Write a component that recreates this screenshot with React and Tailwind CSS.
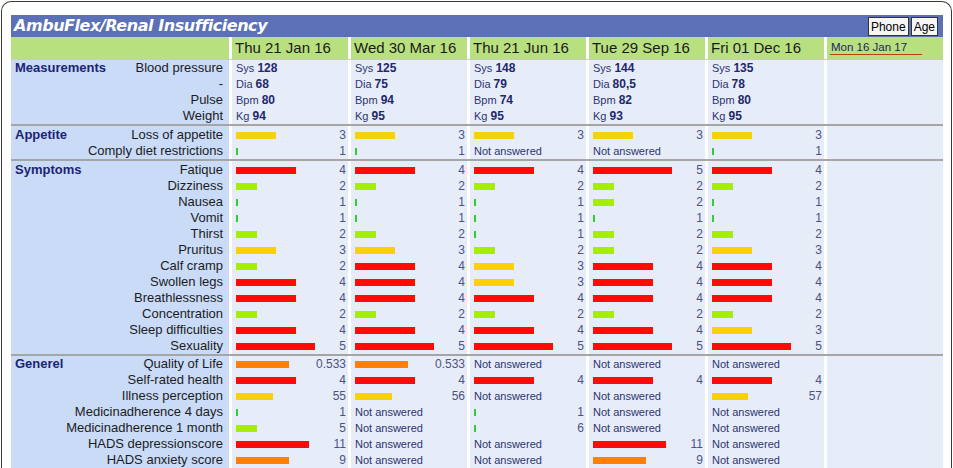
import React from 'react';

const dates = ['Thu 21 Jan 16', 'Wed 30 Mar 16', 'Thu 21 Jun 16', 'Tue 29 Sep 16', 'Fri 01 Dec 16'];

// bar colours by severity
const RED = '#ff0a0a';
const YELLOW = '#f7d10a';
const LIME = '#a6ef05';
const TINY = '#33cc33';
const ORANGE = '#ff8008';

const scale = { 1: 2, 2: 21, 3: 40, 4: 60, 5: 79 };
const tone = { 1: TINY, 2: LIME, 3: YELLOW, 4: RED, 5: RED };

const s = (v) => ({ w: scale[v], c: tone[v], v });
const NA = null;

const measurements = [
  { label: 'Blood pressure', unit: 'Sys', vals: ['128', '125', '148', '144', '135'] },
  { label: '-', unit: 'Dia', vals: ['68', '75', '79', '80,5', '78'] },
  { label: 'Pulse', unit: 'Bpm', vals: ['80', '94', '74', '82', '80'] },
  { label: 'Weight', unit: 'Kg', vals: ['94', '95', '95', '93', '95'] },
];

const sections = [
  {
    title: 'Appetite',
    pad: true,
    rows: [
      { label: 'Loss of appetite', cells: [3, 3, 3, 3, 3].map(s) },
      { label: 'Comply diet restrictions', cells: [s(1), s(1), NA, NA, s(1)] },
    ],
  },
  {
    title: 'Symptoms',
    pad: true,
    rows: [
      ['Fatique', [4, 4, 4, 5, 4]],
      ['Dizziness', [2, 2, 2, 2, 2]],
      ['Nausea', [1, 1, 1, 2, 1]],
      ['Vomit', [1, 1, 1, 1, 1]],
      ['Thirst', [2, 2, 1, 2, 2]],
      ['Pruritus', [3, 3, 2, 2, 3]],
      ['Calf cramp', [2, 4, 3, 4, 4]],
      ['Swollen legs', [4, 4, 3, 4, 4]],
      ['Breathlessness', [4, 4, 4, 4, 4]],
      ['Concentration', [2, 2, 2, 2, 2]],
      ['Sleep difficulties', [4, 4, 4, 4, 3]],
      ['Sexuality', [5, 5, 5, 5, 5]],
    ].map(([label, v]) => ({ label, cells: v.map(s) })),
  },
  {
    title: 'Generel',
    pad: false,
    rows: [
      { label: 'Quality of Life', cells: [{ w: 53, c: ORANGE, v: '0.533' }, { w: 53, c: ORANGE, v: '0.533' }, NA, NA, NA] },
      { label: 'Self-rated health', cells: [s(4), s(4), s(4), s(4), s(4)] },
      { label: 'Illness perception', cells: [{ w: 37, c: YELLOW, v: '55' }, { w: 37, c: YELLOW, v: '56' }, NA, NA, { w: 36, c: YELLOW, v: '57' }] },
      { label: 'Medicinadherence 4 days', cells: [s(1), NA, s(1), NA, NA] },
      { label: 'Medicinadherence 1 month', cells: [{ w: 21, c: LIME, v: '5' }, NA, { w: 2, c: TINY, v: '6' }, NA, NA] },
      { label: 'HADS depressionscore', cells: [{ w: 73, c: RED, v: '11' }, NA, NA, { w: 73, c: RED, v: '11' }, NA] },
      { label: 'HADS anxiety score', cells: [{ w: 53, c: ORANGE, v: '9' }, NA, NA, { w: 53, c: ORANGE, v: '9' }, NA] },
    ],
  },
];

function Bar({ cell }) {
  if (!cell) {
    return <div className="h-4 pl-[4px] leading-4 text-[11px] text-[#2d3372]">Not answered</div>;
  }
  return (
    <div className="h-4 flex items-center pl-[4px] pr-[2px]">
      <div className="h-[7px]" style={{ width: cell.w, background: cell.c }} />
      <div className="flex-1 text-right text-[12px] leading-4 text-[#4d5283]">{cell.v}</div>
    </div>
  );
}

function LabelColumn({ title, labels, pad }) {
  return (
    <div className={`w-[218px] bg-[#c9dbf7] ${pad ? 'pt-[1px]' : ''}`}>
      {labels.map((label, i) => (
        <div key={i} className="h-4 flex items-center justify-between pl-[4px] pr-[6px]">
          <span className="text-[13px] font-bold text-[#1d2474]">{i === 0 ? title : ''}</span>
          <span className="text-[13px] text-[#1c1c1c]">{label}</span>
        </div>
      ))}
    </div>
  );
}

function Section({ title, rows, pad }) {
  return (
    <div className="flex gap-[3px] bg-white">
      <LabelColumn title={title} labels={rows.map((r) => r.label)} pad={pad} />
      {dates.map((_, ci) => (
        <div key={ci} className={`w-[116px] bg-[#e7edf8] ${pad ? 'pt-[1px]' : ''}`}>
          {rows.map((r, ri) => (
            <Bar key={ri} cell={r.cells[ci]} />
          ))}
        </div>
      ))}
      <div className="w-[116px] bg-[#e7edf8]" />
    </div>
  );
}

export default function App() {
  return (
    <div className="w-[953px] h-[468px] bg-white overflow-hidden" style={{ fontFamily: '"Liberation Sans", Arial, sans-serif' }}>
      <div className="ml-[1px] mr-[1px] mt-[1px] h-[480px] rounded-t-[10px] border border-b-0 border-[#3a3a3a] pl-[9px] pt-[13px]">
        <div className="w-[932px]">
          {/* title bar */}
          <div className="h-[22px] bg-[#5b70b6] flex items-center justify-between pl-[3px] pr-[5px]">
            <span
              className="text-white font-bold italic text-[16px] tracking-[-0.45px]"
              style={{ fontFamily: '"DejaVu Sans", Verdana, sans-serif' }}
            >
              AmbuFlex/Renal Insufficiency
            </span>
            <div className="flex gap-[2px] pt-[1px]">
              <button className="h-[19px] px-[2px] bg-[#f6f6f6] border border-[#333] text-[12px] leading-none text-black">Phone</button>
              <button className="h-[19px] px-[2px] bg-[#f6f6f6] border border-[#333] text-[12px] leading-none text-black">Age</button>
            </div>
          </div>

          {/* date header */}
          <div className="flex gap-[3px] bg-white border-b border-[#c9c9c9]">
            <div className="w-[218px] h-[22px] bg-[#b8e07f]" />
            {dates.map((d) => (
              <div key={d} className="w-[116px] h-[22px] bg-[#b8e07f] pl-[3px] text-[15px] leading-[22px] text-[#1a1a1a]">
                {d}
              </div>
            ))}
            <div className="w-[116px] h-[22px] bg-[#b8e07f] pl-[3px] pt-[4px]">
              <div className="w-[92px] border-b border-[#b8420f] text-[11.5px] leading-[13px] pl-[1px] text-[#1d2460]">Mon 16 Jan 17</div>
            </div>
          </div>

          {/* measurements */}
          <div className="flex gap-[3px] bg-white">
            <LabelColumn title="Measurements" labels={measurements.map((m) => m.label)} />
            {dates.map((_, ci) => (
              <div key={ci} className="w-[116px] bg-[#e7edf8]">
                {measurements.map((m) => (
                  <div key={m.label} className="h-4 pl-[4px] leading-4 text-[11px] text-[#2d3372]">
                    {m.unit} <b className="text-[12px] text-[#22286b]">{m.vals[ci]}</b>
                  </div>
                ))}
              </div>
            ))}
            <div className="w-[116px] bg-[#e7edf8]" />
          </div>

          {sections.map((sec) => (
            <React.Fragment key={sec.title}>
              <div className="h-[2px] bg-[#a5a5a5]" />
              <Section title={sec.title} rows={sec.rows} pad={sec.pad} />
            </React.Fragment>
          ))}
        </div>
      </div>
    </div>
  );
}
